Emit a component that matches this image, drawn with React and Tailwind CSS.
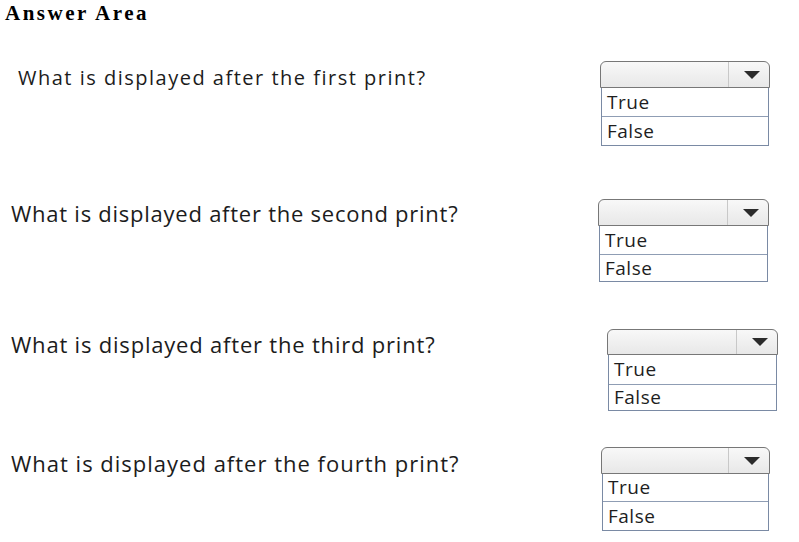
const ROWS = [
  {
    q: 'What is displayed after the first print?',
    row: 'mt-[36px]',
    text: 'pl-[18px] pt-[5px] text-[20px] tracking-[1.5px]',
    box: 'ml-auto mr-[29px] w-[170px]',
    head: 'h-[27px]',
    r1: 'h-[29px]',
    r2: 'h-[28px]',
  },
  {
    q: 'What is displayed after the second print?',
    row: 'mt-[53px]',
    text: 'pl-[11px] pt-[2px] text-[22px] tracking-[0.75px]',
    box: 'ml-auto mr-[30px] w-[171px]',
    head: 'h-[27px]',
    r1: 'h-[29px]',
    r2: 'h-[26px]',
  },
  {
    q: 'What is displayed after the third print?',
    row: 'mt-[47px]',
    text: 'pl-[11px] pt-[3px] text-[22px] tracking-[0.8px]',
    box: 'ml-auto mr-[21px] w-[171px]',
    head: 'h-[26px]',
    r1: 'h-[30px]',
    r2: 'h-[25px]',
  },
  {
    q: 'What is displayed after the fourth print?',
    row: 'mt-[36px]',
    text: 'pl-[11px] pt-[4px] text-[22px] tracking-[1px]',
    box: 'ml-auto mr-[29px] w-[169px]',
    head: 'h-[27px]',
    r1: 'h-[28px]',
    r2: 'h-[28px]',
  },
];

const Dropdown = ({ r }) => (
  <div className={r.box}>
    {/* closed select */}
    <div className={`flex border border-[#777] rounded-t-[6px] bg-gradient-to-b from-[#f8f8f8] to-[#e8e8e8] ${r.head}`}>
      <div className="flex-1" />
      <div className="w-[41px] border-l border-[#c8c8c8] flex items-center justify-end pr-[9px]">
        <svg width="16" height="8" viewBox="0 0 16 8">
          <polygon points="0,0 16,0 8,8" fill="#2b2b2b" />
        </svg>
      </div>
    </div>
    {/* options */}
    <div className="mx-[1px] border border-t-0 border-[#7a8aa4] text-[19px] tracking-[0.5px] text-[#1e1e1e] leading-none">
      <div className={`flex items-center px-[5px] border-b border-[#8f9db4] ${r.r1}`}>True</div>
      <div className={`flex items-center px-[5px] ${r.r2}`}>False</div>
    </div>
  </div>
);

const App = () => (
  <div className="w-[799px] h-[542px] bg-white overflow-hidden" style={{ fontFamily: '"Open Sans", "Noto Sans", sans-serif' }}>
    <h1 className="pl-[5px] pt-[1px] text-[21px] tracking-[2.5px] font-bold leading-[24px] text-black" style={{ fontFamily: '"Liberation Serif", serif' }}>
      Answer Area
    </h1>
    {ROWS.map((r) => (
      <div key={r.q} className={`flex items-start ${r.row}`}>
        <div className={`${r.text} text-[#1c1c1c] leading-[24px]`}>{r.q}</div>
        <Dropdown r={r} />
      </div>
    ))}
  </div>
);

export default App;
